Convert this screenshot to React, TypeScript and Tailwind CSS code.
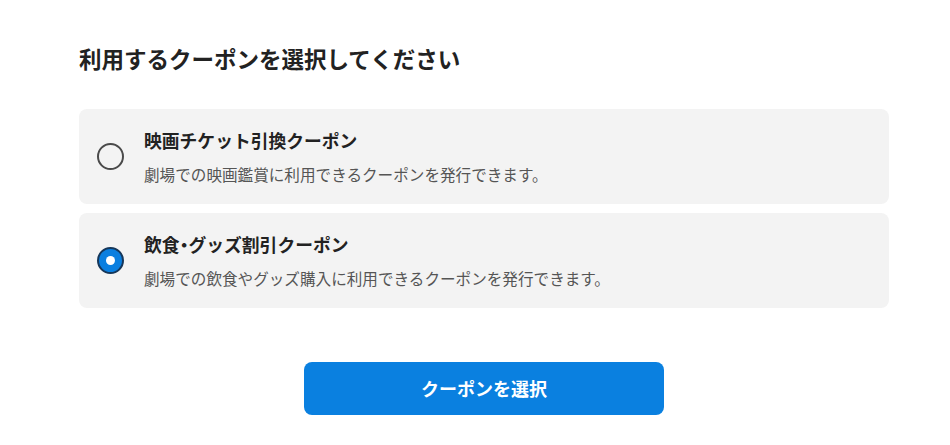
import React, { useState } from 'react';

const coupons = [
  {
    id: 'ticket',
    title: ['映画チケット引換クーポン'],
    description: '劇場での映画鑑賞に利用できるクーポンを発行できます。',
  },
  {
    id: 'food',
    title: ['飲食', '・', 'グッズ割引クーポン'],
    description: '劇場での飲食やグッズ購入に利用できるクーポンを発行できます。',
  },
];

function Radio({ checked }: { checked: boolean }) {
  if (checked) {
    return (
      <span className="flex h-[27px] w-[27px] shrink-0 items-center justify-center rounded-full border-2 border-[#16375a] bg-[#0a7fe0]">
        <span className="h-[9px] w-[9px] rounded-full bg-white" />
      </span>
    );
  }
  return <span className="h-[27px] w-[27px] shrink-0 rounded-full border-2 border-[#4a4a4a] bg-transparent" />;
}

export default function App() {
  const [selected, setSelected] = useState('food');

  return (
    <div
      className="min-h-[445px] w-full bg-white pl-[79px] pt-[43px]"
      style={{ fontFamily: '"Noto Sans CJK JP", "Noto Sans", sans-serif' }}
    >
      <div className="w-[810px]">
        <h2 className="text-[22.5px] font-bold leading-[30px] text-[#222]">
          利用するクーポンを選択してください
        </h2>

        <div className="mt-[36px] flex flex-col gap-[9px]">
          {coupons.map((c) => (
            <button
              key={c.id}
              type="button"
              onClick={() => setSelected(c.id)}
              className="flex items-center gap-5 rounded-lg bg-[#f3f3f3] pb-[19px] pl-[18px] pr-4 pt-[18px] text-left"
            >
              <Radio checked={selected === c.id} />
              <div className="flex flex-col">
                <span className="text-[17.8px] font-bold leading-[26px] text-[#222]">
                  {c.title.map((t, i) =>
                    t === '・' ? (
                      <span key={i} className="[font-feature-settings:'palt']">{t}</span>
                    ) : (
                      <span key={i}>{t}</span>
                    )
                  )}
                </span>
                <span className="mt-[10px] text-[15.6px] leading-[22px] text-[#555]">{c.description}</span>
              </div>
            </button>
          ))}
        </div>

        <div className="mt-[54px] flex justify-center">
          <button
            type="button"
            className="h-[53px] w-[360px] rounded-lg bg-[#0a80e0] text-[18px] font-bold text-white"
          >
            クーポンを選択
          </button>
        </div>
      </div>
    </div>
  );
}
